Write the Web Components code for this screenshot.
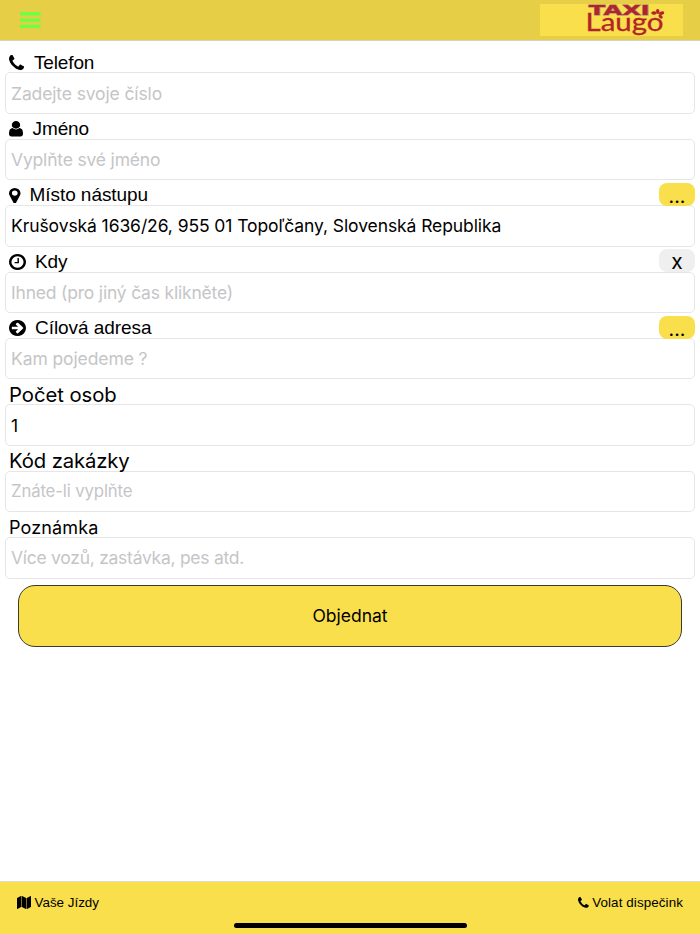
<!DOCTYPE html>
<html lang="cs">
<head>
<meta charset="utf-8">
<title>Taxi Laugo</title>
<style>
  html, body { height: 100%; margin: 0; }
  body { background: #fff; color: #000; font-family: "Liberation Sans", Arial, sans-serif; }
</style>
</head>
<body>
<taxi-app>
  <taxi-header slot="header"></taxi-header>
  <form-field icon="phone" label="Telefon" placeholder="Zadejte svoje číslo" style="--gap: 10px; --tracking: -.13px; --label-tracking: -.15px"></form-field>
  <form-field icon="user" label="Jméno" placeholder="Vyplňte své jméno" style="--gap: 9.5px; --tracking: -.18px; --label-tracking: -.1px"></form-field>
  <form-field icon="marker" label="Místo nástupu" value="Krušovská 1636/26, 955 01 Topoľčany, Slovenská Republika" style="--tracking: -.09px; --label-tracking: -.06px">
    <field-button slot="action">...</field-button>
  </form-field>
  <form-field icon="clock" label="Kdy" placeholder="Ihned (pro jiný čas klikněte)" style="--tracking: -.2px; --label-tracking: -.1px">
    <field-button slot="action" muted>x</field-button>
  </form-field>
  <form-field icon="arrow" label="Cílová adresa" placeholder="Kam pojedeme ?" style="--tracking: -.1px; --label-tracking: -.06px">
    <field-button slot="action">...</field-button>
  </form-field>
  <form-field size="large" label="Počet osob" value="1" style="--label-tracking: -.05px"></form-field>
  <form-field size="large" label="Kód zakázky" placeholder="Znáte-li vyplňte" style="--label-tracking: -.12px; --tracking: -.15px; --size: 16.8px"></form-field>
  <form-field size="medium" label="Poznámka" placeholder="Více vozů, zastávka, pes atd." style="--label-tracking: .15px; --tracking: -.27px"></form-field>
  <order-button>Objednat</order-button>
  <taxi-footer slot="footer"></taxi-footer>
</taxi-app>

<script>
// name: [viewBox, width, height, path]
const ICONS = {
  phone: ['0 128 1408 1408', 15, 15, 'M1408 1240q0 27-10 70.5t-20.5 68.5q-21 50-122 106-94 51-186 51-27 0-52.5-3.5t-57.5-12.5-47.5-14.5-55.5-20.5-49-18q-98-35-175-83-128-79-264.5-215.5t-215.5-264.5q-48-77-83-175-3-9-18-49t-20.5-55.5-14.5-47.5-12.5-57.5-3.5-52.5q0-92 51-186 56-101 106-122 25-10 68.5-20.5t70.5-10.5q14 0 21 3 18 6 53 76 11 19 30 54t35 63.5 31 53.5q3 4 17.5 25t21.5 35.5 7 28.5q0 20-28.5 50t-62 55-62 53-28.5 46q0 9 5 22.5t8.5 20.5 14 24 11.5 19q76 137 174 235t235 174q2 1 19 11.5t24 14 20.5 8.5 22.5 5q18 0 46-28.5t53-62 55-62 50-28.5q14 0 28.5 7t35.5 21.5 25 17.5q25 15 53.5 31t63.5 35 54 30q70 35 76 53 3 7 3 21z'],
  user: ['0 128 1280 1536', 14, 15.5, 'M1280 1399q0 109-62.5 187t-150.5 78h-854q-88 0-150.5-78t-62.5-187q0-85 8.5-160.5t31.5-152 58.5-131 94-89 134.5-34.5q131 128 313 128t313-128q76 0 134.5 34.5t94 89 58.5 131 31.5 152 8.5 160.5zm-256-887q0 159-112.5 271.5t-271.5 112.5-271.5-112.5-112.5-271.5 112.5-271.5 271.5-112.5 271.5 112.5 112.5 271.5z'],
  marker: ['0 128 1024 1536', 11.5, 15.5, 'M768 640q0-106-75-181t-181-75-181 75-75 181 75 181 181 75 181-75 75-181zm256 0q0 109-33 179l-364 774q-16 33-47.5 52t-67.5 19-67.5-19-46.5-52l-365-774q-33-70-33-179 0-212 150-362t362-150 362 150 150 362z'],
  clock: ['0 128 1536 1536', 17, 16, 'M896 544v448q0 14-9 23t-23 9h-320q-14 0-23-9t-9-23v-64q0-14 9-23t23-9h224v-352q0-14 9-23t23-9h64q14 0 23 9t9 23zm416 352q0-148-73-273t-198-198-273-73-273 73-198 198-73 273 73 273 198 198 273 73 273-73 198-198 73-273zm224 0q0 209-103 385.5t-279.5 279.5-385.5 103-385.5-103-279.5-279.5-103-385.5 103-385.5 279.5-279.5 385.5-103 385.5 103 279.5 279.5 103 385.5z'],
  arrow: ['0 128 1536 1536', 17, 16, 'M1285 896q0-27-18-45l-91-91-362-362q-18-18-45-18t-45 18l-91 91q-18 18-18 45t18 45l189 189h-502q-26 0-45 19t-19 45v128q0 26 19 45t45 19h502l-189 189q-19 19-19 45t19 45l91 91q18 18 45 18t45-18l362-362 91-91q18-18 18-45zm251 0q0 209-103 385.5t-279.5 279.5-385.5 103-385.5-103-279.5-279.5-103-385.5 103-385.5 279.5-279.5 385.5-103 385.5 103 279.5 279.5 103 385.5z'],
  map: ['0 0 1792 1792', 14, 13, 'M512 0q13 0 22.5 9.5t9.5 22.5v1472q0 20-17 28l-480 256q-7 4-15 4-13 0-22.5-9.5t-9.5-22.5v-1472q0-20 17-28l480-256q7-4 15-4zm1248 0q13 0 22.5 9.5t9.5 22.5v1472q0 20-17 28l-480 256q-7 4-15 4-13 0-22.5-9.5t-9.5-22.5v-1472q0-20 17-28l480-256q7-4 15-4zm-1120 0q8 0 14 3l512 256q18 10 18 29v1472q0 13-9.5 22.5t-22.5 9.5q-8 0-14-3l-512-256q-18-10-18-29v-1472q0-13 9.5-22.5t22.5-9.5z']
};

class TaxiIcon extends HTMLElement {
  connectedCallback() {
    const [box, width, height, path] = ICONS[this.getAttribute('name')];
    const scale = Number(this.getAttribute('scale')) || 1;
    this.attachShadow({ mode: 'open' }).innerHTML = `
      <style>
        :host { display: inline-flex; flex: none; }
        svg { display: block; fill: currentColor; }
      </style>
      <svg width="${width * scale}" height="${height * scale}" viewBox="${box}" preserveAspectRatio="none"><path fill-rule="evenodd" d="${path}"/></svg>
    `;
  }
}

class TaxiApp extends HTMLElement {
  constructor() {
    super();
    this.attachShadow({ mode: 'open' }).innerHTML = `
      <style>
        :host { display: flex; flex-direction: column; height: 100%; overflow: hidden; }
        main { flex: 1; min-height: 0; padding: 6.4px 5px 0; }
      </style>
      <slot name="header"></slot>
      <main><slot></slot></main>
      <slot name="footer"></slot>
    `;
  }
}

class TaxiHeader extends HTMLElement {
  constructor() {
    super();
    this.attachShadow({ mode: 'open' }).innerHTML = `
      <style>
        :host {
          display: flex;
          justify-content: space-between;
          align-items: center;
          box-sizing: border-box;
          height: 41px;
          padding: 0 17px 0 20px;
          background: #e6cf46;
          border-bottom: 1px solid #d6d3c3;
        }
        button { display: block; padding: 0; border: 0; background: none; }
        svg { display: block; }
        .logo { overflow: visible; background: #f9df4b; }
        text { fill: #b3242a; }
      </style>
      <button aria-label="Menu">
        <svg width="21" height="16" viewBox="0 0 21 16">
          <path fill="#6dff44" d="M0 .1h20.5v3.3H0zM0 6.5h20.5v3.3H0zM0 12.8h20.5v3.2H0z"/>
        </svg>
      </button>
      <svg class="logo" width="143" height="32" viewBox="540 4 143 32">
        <text x="588.8" y="15" font-family="DejaVu Sans, sans-serif" font-weight="700" font-size="13.2" textLength="61" lengthAdjust="spacingAndGlyphs" stroke="#a5807a" stroke-width=".9" paint-order="stroke">TAXI</text>
        <text x="585.5" y="30.6" font-family="Lato, sans-serif" font-size="25" textLength="78" lengthAdjust="spacingAndGlyphs" stroke="#b3242a" stroke-width=".3">Laugo</text>
        <g fill="#b3242a">
          <ellipse cx="654" cy="13" rx="2.8" ry="1.8"/>
          <ellipse cx="657.8" cy="11.5" rx="1.7" ry="2.5" transform="rotate(-10 657.8 11.5)"/>
          <ellipse cx="661.6" cy="13.2" rx="2.7" ry="1.7" transform="rotate(-15 661.6 13.2)"/>
          <ellipse cx="660.6" cy="16.6" rx="2.5" ry="1.6" transform="rotate(45 660.6 16.6)"/>
        </g>
      </svg>
    `;
  }
}

class FormField extends HTMLElement {
  constructor() {
    super();
    this.attachShadow({ mode: 'open' });
  }

  connectedCallback() {
    const icon = this.getAttribute('icon');
    const label = this.getAttribute('label');
    const value = this.getAttribute('value');
    this.shadowRoot.innerHTML = `
      <style>
        :host { display: block; height: 66.42px; }
        .top {
          display: flex;
          justify-content: space-between;
          height: 24.9px;
          padding-left: 4px;
        }
        label {
          display: flex;
          align-items: center;
          gap: var(--gap, 9px);
          box-sizing: border-box;
          height: 27.4px;
          padding-top: 3px;
          font-size: 19px;
          line-height: 24px;
          letter-spacing: var(--label-tracking, 0);
        }
        :host([icon="phone"]) taxi-icon { margin-top: -1px; }
        :host([size]) label { height: 28px; font-family: Inter, sans-serif; }
        :host([size="large"]) label { font-size: 20.3px; }
        :host([size="medium"]) label { font-size: 18px; }
        input {
          display: block;
          box-sizing: border-box;
          width: 100%;
          height: 41.5px;
          margin: 0;
          padding: 0 5px;
          border: 1px solid #e6e6e6;
          border-radius: 5px;
          background: #fff;
          color: #000;
          font: var(--size, 17.5px) Inter, sans-serif;
          letter-spacing: var(--tracking, 0);
        }
        input::placeholder { color: #c5c5c7; opacity: 1; }
      </style>
      <div class="top">
        <label for="input">${icon ? `<taxi-icon name="${icon}"></taxi-icon>` : ''}<span>${label}</span></label>
        <slot name="action"></slot>
      </div>
      <input id="input" type="text">
    `;
    const input = this.shadowRoot.querySelector('input');
    input.placeholder = this.getAttribute('placeholder') || '';
    if (value) input.value = value;
  }
}

class FieldButton extends HTMLElement {
  constructor() {
    super();
    this.attachShadow({ mode: 'open' }).innerHTML = `
      <style>
        :host { display: block; width: 36px; height: 23px; margin-top: 2.6px; }
        button {
          box-sizing: border-box;
          width: 100%;
          height: 100%;
          padding: 3px 0 0;
          border: 0;
          border-radius: 8px;
          background: #f9df4b;
          color: #000;
          font: 19.5px/18px Inter, sans-serif;
        }
        :host([muted]) button { background: #efefef; font-size: 21px; }
      </style>
      <button type="button"><slot></slot></button>
    `;
  }
}

class OrderButton extends HTMLElement {
  constructor() {
    super();
    this.attachShadow({ mode: 'open' }).innerHTML = `
      <style>
        :host { display: block; margin: 6.2px 13px 0; }
        button {
          display: block;
          width: 100%;
          height: 62px;
          padding: 0;
          border: 1px solid #3b3a32;
          border-radius: 17px;
          background: #f9df4b;
          color: #000;
          font: 17.5px Inter, sans-serif;
        }
      </style>
      <button type="submit"><slot></slot></button>
    `;
  }
}

class TaxiFooter extends HTMLElement {
  constructor() {
    super();
    this.attachShadow({ mode: 'open' }).innerHTML = `
      <style>
        :host {
          display: flex;
          flex-direction: column;
          justify-content: space-between;
          align-items: center;
          box-sizing: border-box;
          height: 53px;
          padding: 12px 17px 6px;
          border-top: 1px solid #dedcd0;
          background: #f9df4b;
        }
        nav { display: flex; justify-content: space-between; width: 100%; }
        a { display: flex; align-items: center; gap: 3.5px; font-size: 13.4px; line-height: 17px; }
        a:last-child { letter-spacing: .1px; }
        .bar { width: 233px; height: 5px; border-radius: 3px; background: #000; }
      </style>
      <nav>
        <a><taxi-icon name="map"></taxi-icon><span>Vaše Jízdy</span></a>
        <a><taxi-icon name="phone" scale=".72"></taxi-icon><span>Volat dispečink</span></a>
      </nav>
      <div class="bar"></div>
    `;
  }
}

customElements.define('taxi-icon', TaxiIcon);
customElements.define('taxi-app', TaxiApp);
customElements.define('taxi-header', TaxiHeader);
customElements.define('form-field', FormField);
customElements.define('field-button', FieldButton);
customElements.define('order-button', OrderButton);
customElements.define('taxi-footer', TaxiFooter);
</script>
</body>
</html>
